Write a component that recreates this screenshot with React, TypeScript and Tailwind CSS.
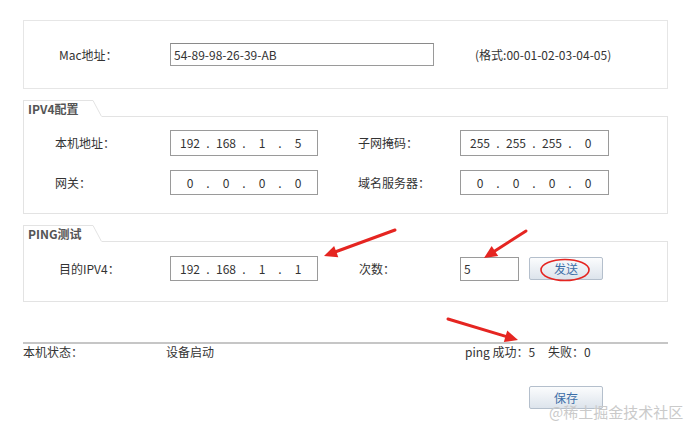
import React from 'react';

const Arrow = ({ x1, y1, x2, y2 }: { x1: number; y1: number; x2: number; y2: number }) => {
  const dx = x2 - x1;
  const dy = y2 - y1;
  const len = Math.hypot(dx, dy);
  const ux = dx / len;
  const uy = dy / len;
  const head = 13;
  const half = 6;
  const bx = x2 - ux * head;
  const by = y2 - uy * head;
  const pts = `${x2},${y2} ${bx - uy * half},${by + ux * half} ${bx + uy * half},${by - ux * half}`;
  return (
    <g>
      <line x1={x1} y1={y1} x2={bx + ux * 2} y2={by + uy * 2} stroke="#e52521" strokeWidth={3} strokeLinecap="round" />
      <polygon points={pts} fill="#e52521" />
    </g>
  );
};

const IpBox = ({ parts, w = 'w-[148px]', h = 'h-[26px]' }: { parts: string[]; w?: string; h?: string }) => (
  <div className={`${w} ${h} border border-[#9a9a9a] bg-white flex items-center pl-[5px] text-[12px] text-[#333]`}>
    {parts.map((p, i) => (
      <React.Fragment key={i}>
        {i > 0 && <span className="w-[8px] text-center">.</span>}
        <span className="w-[28px] text-center">{p}</span>
      </React.Fragment>
    ))}
  </div>
);

const SectionTab = ({ title }: { title: string }) => (
  <div className="flex items-end h-[17px]">
    <div className="h-[17px] w-[70px] border-l border-t border-[#e3e3e3] pl-[4px] flex items-center text-[12px] font-bold text-[#555] leading-none">
      {title}
    </div>
    <svg width="9" height="17" className="block">
      <line x1="0" y1="0.5" x2="8.5" y2="16.5" stroke="#e3e3e3" strokeWidth="1" />
    </svg>
    <div className="flex-1 border-b border-[#e3e3e3]" />
  </div>
);

const Button = ({ label }: { label: string }) => (
  <div className="w-[74px] h-[23px] rounded-[2px] border border-[#b4bfcc] bg-gradient-to-b from-[#fbfcfd] to-[#dde4ec] flex items-center justify-center text-[12px] leading-none text-[#3c6ea8]">
    {label}
  </div>
);

export default function App() {
  return (
    <div className="relative w-[692px] h-[426px] bg-white overflow-hidden font-['Noto_Sans_CJK_SC',sans-serif] text-[#333] text-[12px]">
      <div className="pt-[20px] pl-[23px] w-[668px]">
        {/* Mac */}
        <div className="h-[69px] border border-[#e6e6e6] flex items-center pl-[35px]">
          <div className="w-[111px]">Mac地址：</div>
          <div className="w-[264px] h-[23px] border border-[#9a9a9a] border-t-[#8a8a8a] flex items-center pl-[3px]">
            54-89-98-26-39-AB
          </div>
          <div className="ml-[41px]">(格式:00-01-02-03-04-05)</div>
        </div>

        {/* IPV4 */}
        <div className="mt-[11px]">
          <SectionTab title="IPV4配置" />
          <div className="border-l border-r border-b border-[#e3e3e3] pt-[13px] pb-[18px] pl-[31px] flex flex-col gap-[14px]">
            <div className="flex items-center">
              <div className="w-[115px]">本机地址：</div>
              <IpBox parts={['192', '168', '1', '5']} />
              <div className="w-[102px] ml-[40px]">子网掩码：</div>
              <IpBox parts={['255', '255', '255', '0']} w="w-[149px]" />
            </div>
            <div className="flex items-center">
              <div className="w-[115px]">网关：</div>
              <IpBox parts={['0', '0', '0', '0']} h="h-[25px]" />
              <div className="w-[102px] ml-[40px]">域名服务器：</div>
              <IpBox parts={['0', '0', '0', '0']} w="w-[149px]" h="h-[25px]" />
            </div>
          </div>
        </div>

        {/* PING */}
        <div className="mt-[11px]">
          <SectionTab title="PING测试" />
          <div className="border-l border-r border-b border-[#e3e3e3] pt-[14px] pb-[20px] pl-[35px] flex items-center">
            <div className="w-[111px]">目的IPV4：</div>
            <IpBox parts={['192', '168', '1', '1']} h="h-[25px]" />
            <div className="w-[101px] ml-[41px]">次数：</div>
            <div className="w-[59px] h-[24px] border border-[#9a9a9a] flex items-center pl-[3px]">5</div>
            <div className="ml-[10px]">
              <Button label="发送" />
            </div>
          </div>
        </div>

        {/* status */}
        <div className="mt-[40px] border-t-2 border-[#c6c6c6]">
          <div className="flex items-center h-[16px]">
            <div className="w-[143px]">本机状态：</div>
            <div className="w-[299px]">设备启动</div>
            <div className="w-[83px]">ping 成功：5</div>
            <div>失败：0</div>
          </div>
        </div>

        <div className="mt-[26px] pl-[506px]">
          <Button label="保存" />
        </div>
      </div>

      <div className="absolute left-[549px] top-[404px] text-[15px] text-[#cacaca] leading-none whitespace-nowrap">
        @稀土掘金技术社区
      </div>

      <svg className="absolute inset-0 pointer-events-none" width="692" height="426">
        <Arrow x1={395} y1={230} x2={324} y2={256} />
        <Arrow x1={526} y1={231} x2={484} y2={258} />
        <Arrow x1={448} y1={319} x2={518} y2={340} />
        <ellipse cx={565} cy={270} rx={24} ry={10.5} fill="none" stroke="#e52521" strokeWidth={1.6} />
      </svg>
    </div>
  );
}
